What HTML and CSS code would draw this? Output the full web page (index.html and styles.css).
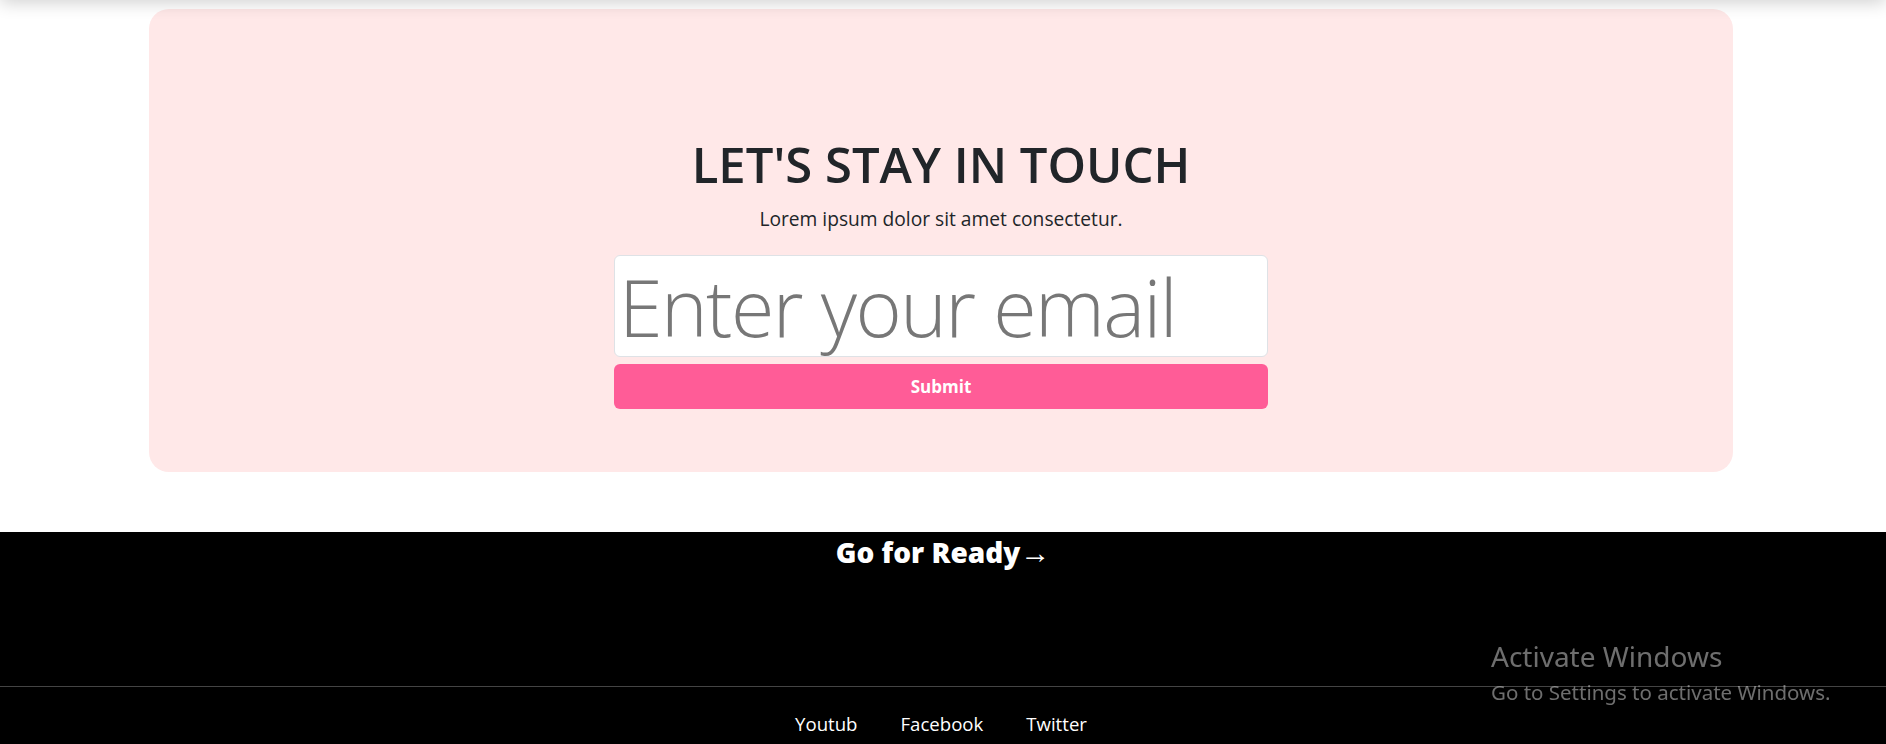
FILE: index.html
```html
<!DOCTYPE html>
<html lang="en">
<head>
<meta charset="utf-8">
<title>Let's stay in touch</title>
<link rel="stylesheet" href="styles.css">
</head>
<body>
<div class="topbar-shadow"></div>
<section class="newsletter">
  <div class="newsletter-card">
    <h1 class="newsletter-title">LET'S STAY IN TOUCH</h1>
    <p class="newsletter-text">Lorem ipsum dolor sit amet consectetur.</p>
    <form class="newsletter-form">
      <input class="email-input" type="email" placeholder="Enter your email">
      <button class="submit-btn" type="button">Submit</button>
    </form>
  </div>
</section>
<footer class="site-footer">
  <h2 class="footer-cta">Go for Ready<span class="arrow">→</span></h2>
  <div class="footer-bottom">
    <nav class="footer-links">
      <a href="#">Youtub</a>
      <a href="#">Facebook</a>
      <a href="#">Twitter</a>
    </nav>
  </div>
</footer>
<div class="win-watermark">
  <div class="wm-title">Activate Windows</div>
  <div class="wm-sub">Go to Settings to activate Windows.</div>
</div>
</body>
</html>
```

FILE: styles.css
```css
* { box-sizing: border-box; }
html, body { margin: 0; padding: 0; }
body {
  font-family: "Open Sans", "Noto Sans", sans-serif;
  background: #ffffff;
  color: #212529;
  overflow: hidden;
}

.topbar-shadow {
  position: fixed;
  top: -20px;
  left: 0;
  right: 0;
  height: 20px;
  box-shadow: 0 2px 18px rgba(0, 0, 0, 0.2);
  z-index: 10;
}

.newsletter {
  padding: 9px 0 60px 149px;
}
.newsletter-card {
  width: 1584px;
  background: #ffe8e8;
  border-radius: 20px;
  padding: 125px 0 63px;
  display: flex;
  flex-direction: column;
  align-items: center;
}
.newsletter-title {
  margin: 0 0 10px;
  font-size: 49px;
  line-height: 60px;
  font-weight: 600;
  color: #212529;
}
.newsletter-text {
  margin: 0 0 22px;
  font-size: 19.2px;
  line-height: 29px;
  color: #212529;
}
.newsletter-form {
  width: 654px;
  display: flex;
  flex-direction: column;
  gap: 7px;
}
.email-input {
  width: 100%;
  height: 102px;
  border: 1px solid #dee2e6;
  border-radius: 6px;
  background: #fff;
  padding: 0 4px;
  font-family: "Open Sans", "Noto Sans", sans-serif;
  font-weight: 300;
  font-size: 79px;
  letter-spacing: -1.6px;
  color: #212529;
  outline: none;
}
.email-input::placeholder { color: #777777; opacity: 1; }
.submit-btn {
  height: 45px;
  border: none;
  border-radius: 6px;
  background: #ff5c97;
  color: #ffffff;
  font-family: "Open Sans", "Noto Sans", sans-serif;
  font-weight: 700;
  font-size: 17px;
}

.site-footer {
  background: #000;
  color: #fff;
  padding: 3px 0 6px;
}
.footer-cta {
  margin: 0;
  text-align: center;
  font-size: 28px;
  line-height: 34px;
  font-weight: 800;
  height: 151px;
}
.footer-cta .arrow { font-weight: 400; font-size: 30px; }
.footer-bottom {
  border-top: 1px solid #444;
  padding-top: 23px;
}
.footer-links {
  display: flex;
  justify-content: center;
  gap: 43px;
  padding-right: 4px;
}
.footer-links a {
  color: #fff;
  text-decoration: none;
  font-size: 18.6px;
  line-height: 28px;
}

.win-watermark {
  position: fixed;
  left: 1491px;
  top: 640px;
  color: rgba(200, 200, 200, 0.55);
  font-family: "Noto Sans", "Open Sans", sans-serif;
  pointer-events: none;
}
.wm-title { font-size: 28px; line-height: 32px; }
.wm-sub { font-size: 20.5px; line-height: 28px; margin-top: 6px; }
```
